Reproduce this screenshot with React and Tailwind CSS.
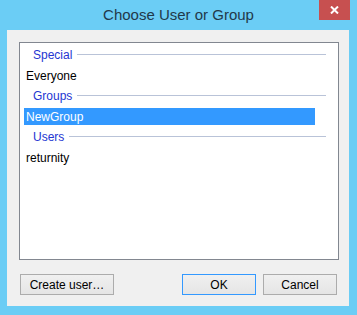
const font = { fontFamily: '"Segoe UI", "Liberation Sans", Arial, sans-serif' }

function GroupHeader({ label }) {
  return (
    <div className="flex items-center h-[24px] pl-[13px] pr-[12px]">
      <span className="text-[#2436d2] text-[12px] leading-none">{label}</span>
      <div className="flex-1 h-px bg-[#b9c3d8] ml-[5px] mt-[-1px]"></div>
    </div>
  )
}

function Item({ label, selected }) {
  return (
    <div className="h-[17px] flex items-center px-[4px]">
      <div className={`h-[17px] w-[291px] flex items-center pl-[2px] text-[12px] ${selected ? 'bg-[#3399ff] text-white' : 'text-black'}`}>
        {label}
      </div>
    </div>
  )
}

function Button({ children, width, primary }) {
  return (
    <button
      className={`h-[21px] ${width} border text-[12px] text-black bg-gradient-to-b from-[#f0f0f0] to-[#e5e5e5] ${primary ? 'border-[#3399ff]' : 'border-[#acacac]'}`}
    >
      {children}
    </button>
  )
}

export default function App() {
  return (
    <div className="w-[357px] h-[315px] bg-[#6bcdf5] flex flex-col" style={font}>
      {/* title bar */}
      <div className="h-[30px] relative flex items-center justify-center">
        <span className="text-[15px] text-[#22394a] mt-[1px]">Choose User or Group</span>
        <div className="absolute top-0 left-[319px] w-[31px] h-[20px] bg-[#c75050] flex items-center justify-center">
          <svg width="9" height="8" viewBox="0 0 9 8">
            <path d="M1 0.5 L8 7.5 M8 0.5 L1 7.5" stroke="white" strokeWidth="2" />
          </svg>
        </div>
      </div>

      {/* client area */}
      <div className="ml-[7px] mr-[8px] mb-[9px] flex-1 bg-[#f0f0f0] flex flex-col pt-[12px] pl-[12px] pr-[10px]">
        <div className="w-[320px] h-[218px] bg-white border border-[#828790]">
          <GroupHeader label="Special" />
          <Item label="Everyone" />
          <GroupHeader label="Groups" />
          <Item label="NewGroup" selected />
          <GroupHeader label="Users" />
          <Item label="returnity" />
        </div>

        <div className="flex items-center mt-[14px] pl-[1px]">
          <Button width="w-[94px]">Create user…</Button>
          <div className="flex-1"></div>
          <Button width="w-[74px]" primary>OK</Button>
          <div className="w-[7px]"></div>
          <Button width="w-[74px]">Cancel</Button>
          <div className="w-[2px]"></div>
        </div>
      </div>
    </div>
  )
}
